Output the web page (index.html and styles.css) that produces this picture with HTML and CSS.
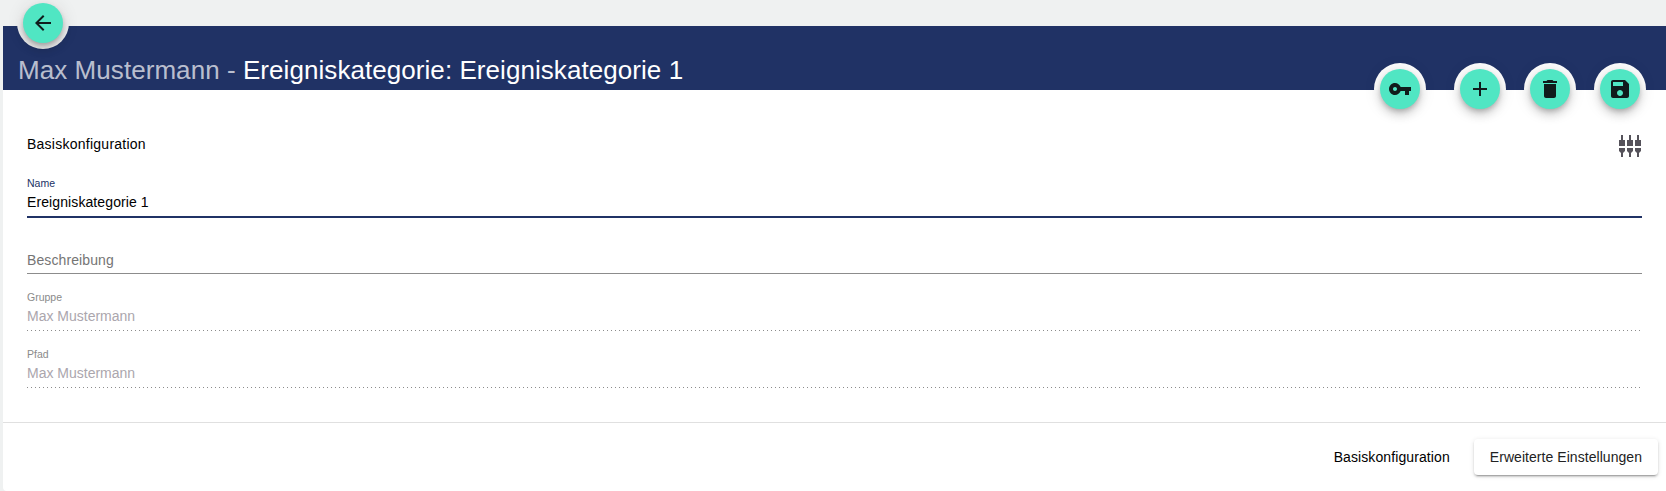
FILE: index.html
```html
<!DOCTYPE html>
<html lang="de">
<head>
  <meta charset="UTF-8">
  <meta name="viewport" content="width=device-width, initial-scale=1.0">
  <title>Ereigniskategorie</title>
  <link rel="stylesheet" href="styles.css">
</head>
<body>
  <div class="page">
    <header class="top-bar">
      <h1><span class="muted">Max Mustermann - </span>Ereigniskategorie: Ereigniskategorie 1</h1>
    </header>

    <div class="notch notch-back">
      <button class="fab" aria-label="Zurück">
        <svg viewBox="0 0 24 24"><path d="M20 11H7.83l5.59-5.59L12 4l-8 8 8 8 1.41-1.41L7.83 13H20v-2z"/></svg>
      </button>
    </div>

    <div class="actions">
      <div class="notch">
        <button class="fab" aria-label="Schlüssel">
          <svg viewBox="0 0 24 24"><path d="M12.65 10C11.83 7.67 9.61 6 7 6c-3.31 0-6 2.69-6 6s2.69 6 6 6c2.61 0 4.83-1.67 5.65-4H17v4h4v-4h2v-4H12.65zM7 14c-1.1 0-2-.9-2-2s.9-2 2-2 2 .9 2 2-.9 2-2 2z"/></svg>
        </button>
      </div>
      <div class="notch notch-add">
        <button class="fab" aria-label="Neu">
          <svg viewBox="0 0 24 24"><path d="M19 13h-6v6h-2v-6H5v-2h6V5h2v6h6v2z"/></svg>
        </button>
      </div>
      <div class="notch">
        <button class="fab" aria-label="Löschen">
          <svg viewBox="0 0 24 24"><path d="M6 19c0 1.1.9 2 2 2h8c1.1 0 2-.9 2-2V7H6v12zM19 4h-3.5l-1-1h-5l-1 1H5v2h14V4z"/></svg>
        </button>
      </div>
      <div class="notch">
        <button class="fab" aria-label="Speichern">
          <svg viewBox="0 0 24 24"><path d="M17 3H5c-1.11 0-2 .9-2 2v14c0 1.1.89 2 2 2h14c1.1 0 2-.9 2-2V7l-4-4zm-5 16c-1.66 0-3-1.34-3-3s1.34-3 3-3 3 1.34 3 3-1.34 3-3 3zm3-10H5V5h10v4z"/></svg>
        </button>
      </div>
    </div>

    <main class="content">
      <div class="section-head">
        <h2>Basiskonfiguration</h2>
        <svg class="sliders" viewBox="0 0 24 22">
          <path d="M3 0h2v5h2v6H1V5h2zM1 13h6v3l-2 2v4H3v-4l-2-2z"/>
          <path d="M11 0h2v5h2v6H9V5h2zM9 13h6v3l-2 2v4h-2v-4l-2-2z"/>
          <path d="M19 0h2v5h2v6h-6V5h2zM17 13h6v3l-2 2v4h-2v-4l-2-2z"/>
        </svg>
      </div>

      <div class="field field-active">
        <label>Name</label>
        <div class="value">Ereigniskategorie 1</div>
      </div>
      <div class="field field-empty">
        <div class="value">Beschreibung</div>
      </div>
      <div class="field field-disabled">
        <label>Gruppe</label>
        <div class="value">Max Mustermann</div>
      </div>
      <div class="field field-disabled">
        <label>Pfad</label>
        <div class="value">Max Mustermann</div>
      </div>
    </main>

    <footer class="tabs">
      <button class="tab">Basiskonfiguration</button>
      <button class="tab tab-raised">Erweiterte Einstellungen</button>
    </footer>
  </div>
</body>
</html>
```

FILE: styles.css
```css
* {
  box-sizing: border-box;
}

html, body {
  height: 100%;
}

body {
  font-family: "Liberation Sans", Arial, sans-serif;
  margin: 0;
  padding: 0;
  background-color: #eff1f1;
  overflow: hidden;
}

.page {
  position: relative;
  height: 491px;
  margin-left: 3px;
  padding-top: 26px;
  display: flex;
  flex-direction: column;
}

.top-bar {
  height: 64px;
  background-color: #203265;
  padding: 30px 0 0 15px;
}

.top-bar h1 {
  margin: 0;
  font-size: 26px;
  font-weight: 400;
  line-height: 29px;
  letter-spacing: 0.06px;
  color: #fff;
}

.muted {
  color: rgba(255, 255, 255, 0.7);
}

.notch {
  width: 52px;
  height: 52px;
  border-radius: 50%;
  background-color: #fff;
  display: flex;
  align-items: center;
  justify-content: center;
}

.notch-back {
  position: absolute;
  left: 14px;
  top: -3px;
  background-color: #f1f2f2;
}

.actions {
  position: absolute;
  top: 63px;
  right: 20px;
  display: flex;
  gap: 18px;
}

.notch-add {
  margin-left: 10px;
}

.fab {
  width: 40px;
  height: 40px;
  padding: 8px;
  border: 0;
  border-radius: 50%;
  background-color: #50e6c3;
  box-shadow: 0 3px 5px -1px rgba(0, 0, 0, 0.2), 0 6px 10px 0 rgba(0, 0, 0, 0.14), 0 1px 18px 0 rgba(0, 0, 0, 0.12);
}

.fab svg {
  display: block;
  width: 24px;
  height: 24px;
  fill: #101c1c;
}

.content {
  flex: 1;
  background-color: #fff;
  padding: 43px 24px 0;
}

.section-head {
  display: flex;
  justify-content: space-between;
  align-items: flex-start;
  height: 44px;
}

.section-head h2 {
  margin: 0;
  padding-top: 3px;
  font-size: 14px;
  font-weight: 400;
  line-height: 17px;
  letter-spacing: 0.25px;
  color: #000;
}

.sliders {
  width: 24px;
  height: 22px;
  margin-top: 2px;
  fill: #55525a;
}

.field label {
  display: block;
  font-size: 10.5px;
  line-height: 13px;
}

.value {
  font-size: 14px;
  line-height: 17px;
  letter-spacing: 0.1px;
  margin-top: 4px;
}

.field-active {
  height: 41px;
  border-bottom: 2px solid #203265;
}

.field-active label {
  color: #203265;
}

.field-active .value {
  color: #000;
}

.field-empty {
  height: 56px;
  padding-top: 34px;
  border-bottom: 1px solid #8c8c8c;
}

.field-empty .value {
  margin-top: 0;
  color: #757575;
}

.field-disabled {
  height: 57px;
  padding-top: 17px;
  background-image: linear-gradient(to right, #8c8c8c 33%, transparent 0%);
  background-size: 4px 1px;
  background-repeat: repeat-x;
  background-position: left bottom 0;
}

.field-disabled label {
  color: #8a8a8a;
}

.field-disabled .value {
  color: #aba6ad;
  letter-spacing: 0;
}

.tabs {
  height: 69px;
  background-color: #fff;
  border-top: 1px solid #e0e0e0;
  border-bottom-left-radius: 4px;
  padding: 16px 8px 0 0;
  display: flex;
  justify-content: flex-end;
  align-items: flex-start;
}

.tab {
  height: 36px;
  padding: 0 16px;
  border: 0;
  border-radius: 4px;
  background: transparent;
  font-family: inherit;
  font-size: 14px;
  letter-spacing: 0.1px;
  color: #000;
}

.tab-raised {
  margin-left: 8px;
  background-color: #fff;
  color: #222;
  letter-spacing: 0.05px;
  box-shadow: 0 3px 1px -2px rgba(0, 0, 0, 0.2), 0 2px 2px 0 rgba(0, 0, 0, 0.14), 0 1px 5px 0 rgba(0, 0, 0, 0.12);
}
```
